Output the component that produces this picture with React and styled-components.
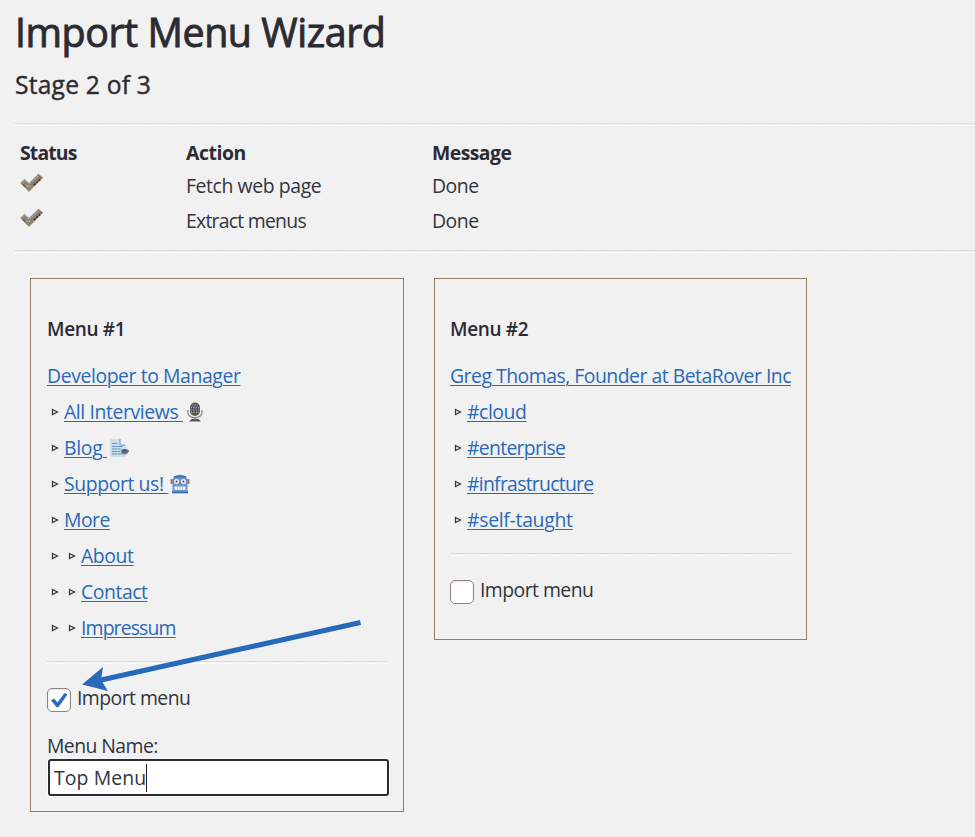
import React from "react";
import styled, { createGlobalStyle } from "styled-components";

const Global = createGlobalStyle`
  * { box-sizing: border-box; }
  html, body { margin: 0; background: #f1f1f1; }
  body {
    font-family: "Open Sans", "Noto Sans", sans-serif;
    font-size: 19.4px;
    color: #30353f;
    overflow: hidden;
  }
`;

const Page = styled.main`
  height: 837px;
  padding: 8px 0 0 15px;
  overflow: hidden;
`;

const Title = styled.h1`
  margin: 0;
  height: 50px;
  font-size: 39.4px;
  line-height: 48px;
  font-weight: 400;
  -webkit-text-stroke: 0.9px #2b2b33;
  letter-spacing: -0.45px;
  color: #2b2b33;
  white-space: nowrap;
`;

const Stage = styled.h2`
  margin: 0;
  height: 65px;
  font-size: 24.6px;
  line-height: 54px;
  font-weight: 400;
  -webkit-text-stroke: 0.4px #2b2b33;
  letter-spacing: 0.22px;
  color: #2b2b33;
`;

const Rule = styled.hr`
  height: 3px;
  margin: 0;
  border: 0;
  background:
    repeating-linear-gradient(90deg, #dcd5cc 0 2px, #e9e6e2 2px 3px) 0 0 / 100% 1px no-repeat,
    repeating-linear-gradient(90deg, #ffffff 0 2px, #f4f4f4 2px 3px) 0 2px / 100% 1px no-repeat;
`;

const StatusGrid = styled.div`
  display: grid;
  grid-template-columns: 166px 246px 1fr;
  grid-template-rows: 33px 35px 35px;
  height: 124px;
  padding: 9px 0 0 5px;
  line-height: 36px;
`;

const Heading = styled.strong`
  font-weight: 700;
  letter-spacing: ${(p) => p.$ls}px;
  color: #2b2b33;
`;

const Cell = styled.span`
  letter-spacing: ${(p) => p.$ls}px;
`;

const StatusMark = styled.svg`
  display: block;
  width: 25px;
  height: 20px;
  margin: 5px 0 0 -1px;
`;

const Cards = styled.section`
  display: flex;
  align-items: flex-start;
  gap: 30px;
  margin: 25px 0 0 15px;
`;

const Card = styled.article`
  position: relative;
  width: ${(p) => p.$w}px;
  height: ${(p) => p.$h}px;
  border: 1px solid #8f806c;
  padding: 32px 15px 0 ${(p) => p.$pl}px;
`;

const CardTitle = styled.h3`
  margin: 0 0 11px;
  font-size: 19px;
  line-height: 36px;
  font-weight: 600;
  letter-spacing: -0.35px;
  color: #2b2b33;
`;

const Row = styled.div`
  display: flex;
  align-items: center;
  height: 36px;
  line-height: 36px;
  white-space: nowrap;
`;

const Arrows = styled.span`
  display: flex;
  gap: 9px;
  width: ${(p) => p.$level * 17}px;
  padding-left: 4px;
`;

const Link = styled.a`
  color: #2a69b8;
  white-space: pre;
  text-decoration: underline;
  text-decoration-thickness: 1px;
  text-underline-offset: 2px;
  letter-spacing: ${(p) => p.$ls}px;
`;

const Emoji = styled.svg`
  width: 20px;
  height: 20px;
  margin-left: 2px;
`;

const CardRule = styled(Rule)`
  margin-top: 15px;
`;

const CheckRow = styled.label`
  display: flex;
  align-items: flex-start;
  gap: 6px;
  height: 48px;
  margin-top: 24px;
  line-height: 20px;
  letter-spacing: -0.55px;
`;

const Box = styled.span`
  display: flex;
  align-items: center;
  justify-content: center;
  width: 24px;
  height: 24px;
  border: 1px solid #8f8478;
  border-radius: 5px;
  background: #fff;
  box-shadow: inset 0 1px 2px rgba(0, 0, 0, 0.1);
`;

const Label = styled.div`
  line-height: 20px;
  letter-spacing: -0.57px;
`;

const NameField = styled.div`
  display: flex;
  align-items: center;
  width: 341px;
  height: 37px;
  margin: 3px 0 0 1px;
  padding-left: 4px;
  border: 2px solid #2a2a33;
  border-radius: 3px;
  background: #fff;
  box-shadow: 0 0 0 1px #fafafa;
  letter-spacing: 0.1px;
  white-space: nowrap;
`;

const Caret = styled.i`
  width: 1px;
  height: 28px;
  background: #222;
`;

const Pointer = styled.svg`
  position: absolute;
  left: 50px;
  top: 338px;
  width: 284px;
  height: 78px;
  pointer-events: none;
`;

function Tick() {
  return (
    <StatusMark viewBox="0 0 24 20">
      <path d="M.8 10 L5 6 L9.5 10 L19 .8 L23.500 4.500 L9.500 19 Z" fill="#8e816f" stroke="#d8c9b8" strokeWidth=".6" />
      <path d="M3.500 8.500 L5.500 7.500 L10 11.500 L19 2.500" fill="none" stroke="#9bb3cc" strokeWidth="1" strokeDasharray="2 1" />
      <path d="M14.500 12 L22 5" fill="none" stroke="#33333b" strokeWidth="1.800" strokeDasharray="2 1.2" />
      <path d="M3 11.500 L6 14" stroke="#44444b" strokeWidth="1" />
      <path d="M7 13 L11 13.500" stroke="#d5e5ec" strokeDasharray="1.2 1" />
    </StatusMark>
  );
}

function Mic() {
  return (
    <Emoji viewBox="0 0 20 20">
      <path d="M3 8v2.500c0 3 3 5.200 7 5.200s7-2.200 7-5.200V8M10 15v3" fill="none" stroke="#8b7e72" strokeWidth="1.3" />
      <rect x="5" y=".5" width="10" height="13.500" rx="5" fill="#55555a" />
      <path d="M7 3h6M5.500 5.500h9M5.500 8h9M6 10.500h8" stroke="#ab9684" strokeDasharray="1.500 1" />
      <path d="M6.500 4.300h7M5.500 6.800h9M6 9.300h8" stroke="#6683ac" strokeWidth=".8" strokeDasharray="1 1.500" />
      <path d="M4 19.500h12l-2.500-2.500h-7z" fill="#5f574f" />
      <path d="M3.500 12l3 2.500M13.500 14.500l3-2.500" stroke="#a9c4d4" />
    </Emoji>
  );
}

function Memo() {
  return (
    <Emoji viewBox="0 0 20 20">
      <path d="M1 1h10l6 6v12H1z" fill="#cfdfe8" />
      <path d="M11 1v6h6z" fill="#f4f6f8" />
      <path d="M11 1v6h5" fill="none" stroke="#6e96cc" />
      <path d="M3 5.500h6M3 8.500h11M3 11h9M3 13.500h8M3 16h10" stroke="#668fc9" strokeDasharray="5 .6" />
      <path d="M12 12.500c2-2 6-2 7.800 0-.6 4-5.500 5-7.300 2.500z" fill="#3a6399" />
      <path d="M14 15l3 .5 2.500-3" fill="none" stroke="#8b715f" strokeWidth="1.300" />
    </Emoji>
  );
}

function Robot() {
  return (
    <Emoji viewBox="0 0 20 20">
      <path d="M4 3.500C6-.2 14-.2 16 3.500" fill="#8d7966" />
      <rect x=".5" y="5" width="3" height="5" rx="1" fill="#8b7b6c" />
      <rect x="16.500" y="5" width="3" height="5" rx="1" fill="#8b7b6c" />
      <path d="M4 2.500h12l1.500 3v12H2.500v-12z" fill="#7196cc" />
      <path d="M4 2.800h12" stroke="#2f6cbd" strokeWidth="1.300" />
      <circle cx="6.500" cy="7.500" r="2.500" fill="#f3eee5" />
      <circle cx="13.500" cy="7.500" r="2.500" fill="#f3eee5" />
      <circle cx="6.500" cy="7.500" r="1" fill="#4a4c55" />
      <circle cx="13.500" cy="7.500" r="1" fill="#4a4c55" />
      <path d="M9 10l1-2 1 2z" fill="#4378b9" />
      <rect x="4.500" y="12.500" width="11" height="3.500" rx=".8" fill="#f2f4f6" />
      <path d="M7.500 12.500v3.500M10 12.500v3.500M12.500 12.500v3.500" stroke="#8ba9cc" strokeWidth=".7" />
      <path d="M2 18.300h16" stroke="#2f6cbd" strokeWidth="2" />
    </Emoji>
  );
}

function Bullet() {
  return (
    <svg width="8" height="8" viewBox="0 0 8 8">
      <path d="M1.500 1.500 L6.500 4 L1.500 6.500 Z" fill="#e8eaed" stroke="#34343e" strokeWidth="1.200" />
    </svg>
  );
}

const first = [
  { text: "Developer to Manager", level: 0, ls: -0.41 },
  { text: "All Interviews ", level: 1, ls: -0.4, icon: <Mic /> },
  { text: "Blog ", level: 1, ls: -0.3, icon: <Memo /> },
  { text: "Support us! ", level: 1, ls: -0.4, icon: <Robot /> },
  { text: "More", level: 1, ls: -0.5 },
  { text: "About", level: 2, ls: -0.4 },
  { text: "Contact", level: 2, ls: -0.45 },
  { text: "Impressum", level: 2, ls: -0.87 },
];

const second = [
  { text: "Greg Thomas, Founder at BetaRover Inc", level: 0, ls: -0.5 },
  { text: "#cloud", level: 1, ls: -0.45 },
  { text: "#enterprise", level: 1, ls: -0.7 },
  { text: "#infrastructure", level: 1, ls: -0.73 },
  { text: "#self-taught", level: 1, ls: -0.3 },
];

function MenuTree({ items }) {
  return items.map((item) => (
    <Row key={item.text}>
      {item.level > 0 && (
        <Arrows $level={item.level}>
          {Array.from({ length: item.level }, (_, i) => <Bullet key={i} />)}
        </Arrows>
      )}
      <Link $ls={item.ls}>{item.text}</Link>
      {item.icon}
    </Row>
  ));
}

export default function App() {
  return (
    <>
      <Global />
      <Page>
        <Title>Import Menu Wizard</Title>
        <Stage>Stage 2 of 3</Stage>
        <Rule />
        <StatusGrid>
          <Heading $ls={-0.85}>Status</Heading>
          <Heading $ls={-0.45}>Action</Heading>
          <Heading $ls={-0.55}>Message</Heading>
          <Tick />
          <Cell $ls={-0.4}>Fetch web page</Cell>
          <Cell $ls={-0.5}>Done</Cell>
          <Tick />
          <Cell $ls={-0.75}>Extract menus</Cell>
          <Cell $ls={-0.5}>Done</Cell>
        </StatusGrid>
        <Rule />
        <Cards>
          <Card $w={374} $h={534} $pl={16}>
            <CardTitle>Menu #1</CardTitle>
            <MenuTree items={first} />
            <CardRule />
            <CheckRow>
              <Box>
                <svg width="18" height="18" viewBox="0 0 18 18">
                  <path d="M1 9.500 L4 7.500 L7.500 11.500 L14.500 2 L17.500 3.500 L8.500 16 H6.500 Z" fill="#286ac0" />
                </svg>
              </Box>
              Import menu
            </CheckRow>
            <Label>Menu Name:</Label>
            <NameField>Top Menu<Caret /></NameField>
            <Pointer viewBox="0 0 284 78">
              <path d="M279.500 5.500 L20 63" stroke="#2869bb" strokeWidth="5" />
              <path d="M1 67.500 L22 50 L20 63 L27 74 Z" fill="#2869bb" />
            </Pointer>
          </Card>
          <Card $w={373} $h={362} $pl={15}>
            <CardTitle>Menu #2</CardTitle>
            <MenuTree items={second} />
            <CardRule />
            <CheckRow><Box />Import menu</CheckRow>
          </Card>
        </Cards>
      </Page>
    </>
  );
}
